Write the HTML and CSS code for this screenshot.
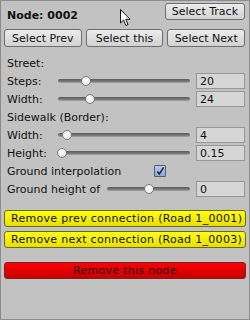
FILE: index.html
```html
<!DOCTYPE html>
<html lang="en">
<head>
  <meta charset="UTF-8">
  <title>Road Node</title>
  <link rel="stylesheet" href="styles.css">
</head>
<body>

<div class="panel">
  <div class="header">
    <span class="node-title">Node: 0002</span>
    <button class="btn">Select Track</button>
  </div>

  <div class="select-row">
    <button class="btn">Select Prev</button>
    <button class="btn">Select this</button>
    <button class="btn">Select Next</button>
  </div>

  <div class="fields">
    <div class="row"><span class="label">Street:</span></div>
    <div class="row">
      <span class="label">Steps:</span>
      <div class="slider"><div class="track"></div><div class="thumb" style="left: 21%"></div></div>
      <div class="num">20</div>
    </div>
    <div class="row">
      <span class="label">Width:</span>
      <div class="slider"><div class="track"></div><div class="thumb" style="left: 24%"></div></div>
      <div class="num">24</div>
    </div>
    <div class="row"><span class="label">Sidewalk (Border):</span></div>
    <div class="row">
      <span class="label">Width:</span>
      <div class="slider"><div class="track"></div><div class="thumb" style="left: 7%"></div></div>
      <div class="num">4</div>
    </div>
    <div class="row">
      <span class="label">Height:</span>
      <div class="slider"><div class="track"></div><div class="thumb" style="left: 3%"></div></div>
      <div class="num">0.15</div>
    </div>
    <div class="row">
      <span class="label">Ground interpolation</span>
      <span class="check">
        <svg width="11" height="11" viewBox="0 0 11 11"><path d="M2.5 5.5 L4.8 8.2 L9.5 1" fill="none" stroke="#1a2233" stroke-width="1.6"/></svg>
      </span>
    </div>
    <div class="row">
      <span class="label">Ground height of</span>
      <div class="slider"><div class="track"></div><div class="thumb" style="left: 51%"></div></div>
      <div class="num">0</div>
    </div>
  </div>

  <div class="remove-group">
    <button class="btn wide yellow">Remove prev connection (Road 1_0001)</button>
    <button class="btn wide yellow">Remove next connection (Road 1_0003)</button>
  </div>

  <button class="btn wide red">Remove this node</button>

  <svg class="cursor" width="11" height="18" viewBox="0 0 11 18">
    <path d="M0.5 0.5 L0.5 14 L3.6 11 L5.8 16.5 L8 15.6 L5.8 10.3 L10 10.3 Z" fill="#fff" stroke="#111" stroke-width="1"/>
  </svg>
</div>

</body>
</html>
```

FILE: styles.css
```css
* { box-sizing: border-box; margin: 0; padding: 0; }
body {
  font-family: "DejaVu Sans", sans-serif;
  font-size: 11px;
  color: #111;
  background: #c2c2c2;
}

.panel {
  position: relative;
  width: 250px;
  height: 320px;
  background: #c2c2c2;
  border: 1px solid #8c8c8c;
  padding: 2px 4px 0 3px;
}

.header {
  display: flex;
  justify-content: space-between;
  align-items: flex-start;
  height: 26px;
}
.node-title {
  font-weight: bold;
  padding: 6px 0 0 3px;
}

.btn {
  font-family: "DejaVu Sans", sans-serif;
  font-size: 11px;
  color: #111;
  height: 17px;
  padding: 0 6px;
  border: 1px solid #6e6e6e;
  border-radius: 3px;
  background: linear-gradient(#ececec, #d2d2d2);
  white-space: nowrap;
}

.select-row {
  display: flex;
  gap: 4px;
}
.select-row .btn {
  flex: 1;
  height: 18px;
  padding: 0;
}

.fields {
  margin-top: 7px;
  padding-left: 3px;
}
.row {
  display: flex;
  align-items: center;
  height: 18px;
}
.label {
  min-width: 51px;
  padding-right: 7px;
  white-space: nowrap;
}

.slider {
  position: relative;
  flex: 1;
  height: 18px;
  margin-right: 6px;
}
.track {
  position: absolute;
  left: 0;
  right: 0;
  top: 7px;
  height: 4px;
  border-radius: 2px;
  background: linear-gradient(#5a5a5a, #7a7a7a 60%, #a8a8a8);
}
.thumb {
  position: absolute;
  top: 4px;
  width: 10px;
  height: 10px;
  margin-left: -5px;
  border-radius: 50%;
  border: 1px solid #7a7a7a;
  background: radial-gradient(circle at 40% 35%, #ffffff, #dedede);
}

.num {
  width: 49px;
  height: 16px;
  border: 1px solid #979797;
  background: #d6d6d6;
  padding: 1px 0 0 3px;
}

.check {
  display: flex;
  width: 12px;
  height: 12px;
  margin-left: 26px;
  border: 1px solid #4e5f7a;
  border-radius: 1px;
  background: linear-gradient(#b9cbe6, #8fa8d0);
  align-items: center;
  justify-content: center;
}

.remove-group {
  display: flex;
  flex-direction: column;
  gap: 4px;
  margin-top: 12px;
}
.wide {
  width: 242px;
  letter-spacing: 0.3px;
}
.yellow {
  border-color: #6b6b20;
  background: linear-gradient(#ffff10, #e8de00);
}
.red {
  margin-top: 14px;
  border-color: #7a2020;
  color: #2a0000;
  background: linear-gradient(#ff0000, #c80000);
}

.cursor {
  position: absolute;
  left: 119px;
  top: 8px;
}
```
